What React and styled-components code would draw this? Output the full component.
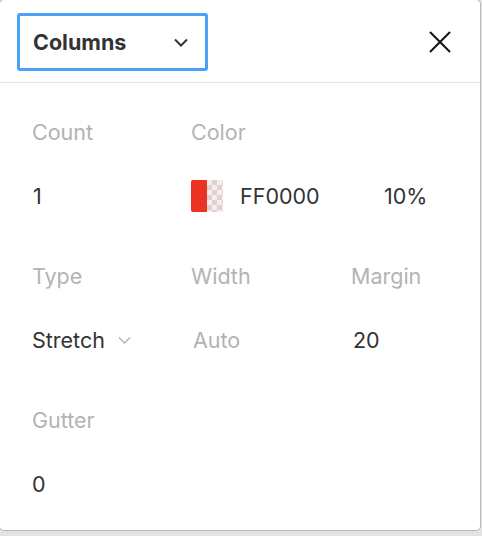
import React from "react";
import styled, { createGlobalStyle } from "styled-components";

const Global = createGlobalStyle`
  html, body { margin: 0; padding: 0; background: #e3e3e3; }
  body { font-family: Inter, "Noto Sans", sans-serif; -webkit-font-smoothing: antialiased; }
`;

const Panel = styled.div`
  box-sizing: border-box;
  width: 482px;
  height: 532px;
  margin: -1px 0 0 -1px;
  background: #fff;
  border: 1px solid #b9b9b9;
  border-radius: 5px;
  overflow: hidden;
`;

const Header = styled.div`
  height: 83px;
  box-sizing: border-box;
  border-bottom: 1px solid #e5e5e5;
  display: flex;
  align-items: flex-start;
  justify-content: space-between;
  padding: 13px 0 0 17px;
`;

const Select = styled.div`
  box-sizing: border-box;
  width: 191px;
  height: 58px;
  border: 3px solid #4ba0f7;
  border-radius: 3px;
  display: flex;
  align-items: center;
  justify-content: space-between;
  padding: 0 17px 0 13px;
  font-size: 21.5px;
  font-weight: 700;
  color: #333;
`;

const CloseBtn = styled.div`
  width: 24px;
  height: 24px;
  margin: 17px 28px 0 0;
  display: flex;
  align-items: center;
  justify-content: center;
`;

const Body = styled.div`
  padding: 17px 0 0 32px;
  display: flex;
  flex-direction: column;
  gap: 16px;
`;

const Section = styled.div`
  display: grid;
  grid-template-columns: 159px 160px 1fr;
  grid-auto-rows: 64px;
`;

const Cell = styled.div`
  display: flex;
  align-items: center;
  gap: ${(p) => p.$gap || 0}px;
  font-size: 21.5px;
  color: ${(p) => (p.$muted ? "#b3b3b3" : "#333")};
  padding-left: ${(p) => p.$indent || 0}px;
  white-space: nowrap;
`;

const Swatch = styled.div`
  width: 32px;
  height: 32px;
  border-radius: 2px;
  overflow: hidden;
  display: flex;
  flex: none;
`;

const SwatchSolid = styled.div`
  width: 16px;
  background: #ea3323;
`;

const SwatchAlpha = styled.div`
  width: 16px;
  background-color: #fbeceb;
  background-image:
    linear-gradient(45deg, #dcd2d2 25%, transparent 25%, transparent 75%, #dcd2d2 75%),
    linear-gradient(45deg, #dcd2d2 25%, transparent 25%, transparent 75%, #dcd2d2 75%);
  background-size: 10px 10px;
  background-position: 0 0, 5px 5px;
`;

const Hex = styled.span`
  display: inline-block;
  flex: none;
  margin-left: 17px;
  width: 144px;
`;

const Chevron = ({ color = "#333", w = 14, sw = 2 }) => (
  <svg width={w} height={w / 2 + 2} viewBox="0 0 14 9" fill="none">
    <path d="M1 1.5 L7 7.5 L13 1.5" stroke={color} strokeWidth={sw} />
  </svg>
);

export default function App() {
  return (
    <>
      <Global />
      <Panel>
        <Header>
          <Select>
            <span>Columns</span>
            <Chevron />
          </Select>
          <CloseBtn>
            <svg width="22" height="22" viewBox="0 0 22 22">
              <path d="M1 1 L21 21 M21 1 L1 21" stroke="#111" strokeWidth="2" />
            </svg>
          </CloseBtn>
        </Header>
        <Body>
          <Section>
            <Cell $muted>Count</Cell>
            <Cell $muted>Color</Cell>
            <Cell />
            <Cell $indent={1}>1</Cell>
            <Cell>
              <Swatch>
                <SwatchSolid />
                <SwatchAlpha />
              </Swatch>
              <Hex>FF0000</Hex>
              <span>10%</span>
            </Cell>
          </Section>
          <Section>
            <Cell $muted>Type</Cell>
            <Cell $muted>Width</Cell>
            <Cell $muted>Margin</Cell>
            <Cell $gap={13}>
              Stretch
              <Chevron color="#b3b3b3" w={13} sw={1.5} />
            </Cell>
            <Cell $muted $indent={2}>Auto</Cell>
            <Cell $indent={2}>20</Cell>
          </Section>
          <Section>
            <Cell $muted>Gutter</Cell>
            <Cell />
            <Cell />
            <Cell>0</Cell>
          </Section>
        </Body>
      </Panel>
    </>
  );
}
